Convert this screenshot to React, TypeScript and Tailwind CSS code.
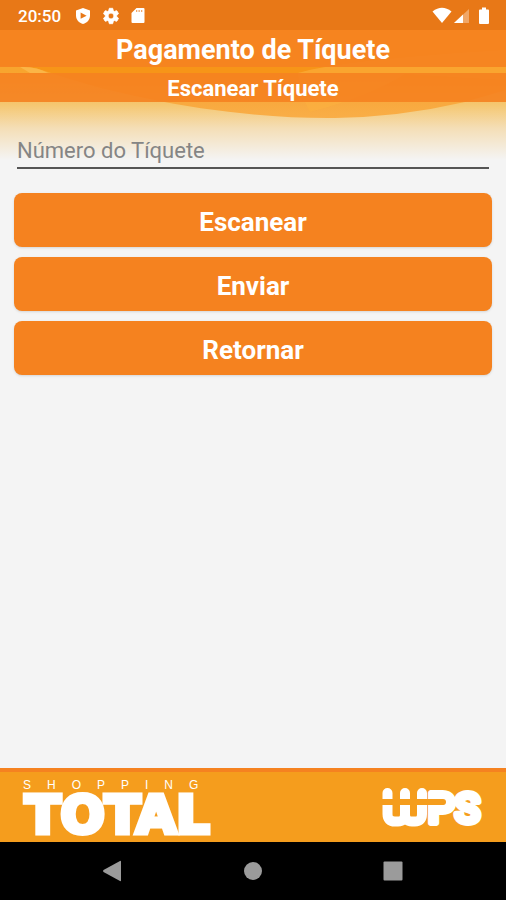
import { useState } from "react";

const actions = ["Escanear", "Enviar", "Retornar"];

function StatusBar() {
  return (
    <div className="relative flex h-[30px] items-center justify-between bg-[#e87817] pt-0.5 pr-4 pl-[18px] text-white">
      <div className="flex items-center gap-3">
        <span className="mr-0.5 text-[17px] leading-5 font-medium">20:50</span>
        <svg width="16" height="18" viewBox="0 0 16 18" fill="currentColor" aria-hidden="true">
          <path d="M8 1 15 3.6V8.5C15 12.6 12 16 8 17 4 16 1 12.6 1 8.500V3.600Z" />
          <path d="M5.600 5.600 11.600 8.700 5.600 11.800Z" fill="#e87817" />
        </svg>
        <svg width="16" height="18" viewBox="2 1 20 22" fill="currentColor" stroke="currentColor" strokeWidth="1" aria-hidden="true">
          <path d="M19.140 12.940c.04-.3.060-.61.060-.94 0-.32-.02-.64-.07-.94l2.030-1.580c.18-.14.230-.41.120-.61l-1.920-3.320c-.12-.22-.37-.29-.59-.22l-2.390.96c-.5-.38-1.030-.7-1.620-.94l-.36-2.540c-.04-.24-.24-.41-.48-.41h-3.840c-.24 0-.43.170-.47.410l-.36 2.540c-.59.240-1.130.570-1.620.940l-2.390-.96c-.22-.08-.47 0-.59.220L2.740 8.870c-.12.210-.08.470.120.610l2.030 1.580c-.05.3-.09.630-.09.940s.02.640.070.940l-2.030 1.580c-.18.140-.23.410-.12.610l1.920 3.320c.12.220.370.290.590.220l2.390-.96c.5.380 1.030.7 1.620.940l.36 2.540c.05.240.240.410.480.410h3.840c.24 0 .44-.17.470-.41l.36-2.540c.59-.24 1.130-.56 1.620-.94l2.390.960c.22.080.470 0 .59-.22l1.920-3.320c.12-.22.070-.47-.12-.61zM12 15.600c-1.980 0-3.600-1.620-3.600-3.600s1.620-3.600 3.600-3.600 3.600 1.620 3.600 3.600-1.620 3.600-3.600 3.600z" />
        </svg>
        <svg width="14" height="18" viewBox="0 0 14 18" fill="currentColor" aria-hidden="true">
          <path d="M5.500 1H12.500Q13.500 1 13.500 2V15Q13.500 16 12.500 16H1.500Q.5 16 .5 15V6Z" />
          <path d="M5 3h1.300v2H5zM7.500 3h1.300v2H7.500zM10 3h1.300v2H10z" fill="#f0a76a" />
        </svg>
      </div>
      <div className="flex items-center">
        <svg width="20" height="18" viewBox="0 0 20 18" fill="currentColor" aria-hidden="true">
          <path d="M.5 4.500Q10-3 19.500 4.500L10 16Z" />
        </svg>
        <svg className="ml-0.5" width="16" height="18" viewBox="0 0 16 18" fill="currentColor" aria-hidden="true">
          <path d="M0 16 15 2V16Z" opacity=".35" />
          <path d="M0 16 9 7.500V16Z" />
        </svg>
        <svg className="ml-2" width="12" height="18" viewBox="0 0 12 18" fill="currentColor" aria-hidden="true">
          <path d="M4 .5H8V2.500H10Q11 2.500 11 3.500V16Q11 17 10 17H2Q1 17 1 16V3.500Q1 2.500 2 2.500H4Z" />
        </svg>
      </div>
    </div>
  );
}

// Orange waves behind the header, fading into the page
function Waves() {
  return (
    <svg
      className="absolute inset-x-0 top-0 h-[160px] w-full"
      viewBox="0 0 506 160"
      preserveAspectRatio="none"
      aria-hidden="true"
    >
      <defs>
        <linearGradient id="fade" x1="0" y1="0" x2="0" y2="1">
          <stop offset="0" stopColor="#f8a52e" />
          <stop offset=".45" stopColor="#f8a52e" />
          <stop offset=".66" stopColor="#f5c873" />
          <stop offset=".8" stopColor="#f4deb6" />
          <stop offset="1" stopColor="#f4f4f4" />
        </linearGradient>
        <linearGradient id="wave" x1="0" y1="0" x2="0" y2="1">
          <stop offset="0" stopColor="#f79518" />
          <stop offset=".5" stopColor="#f79518" />
          <stop offset=".82" stopColor="#f8a93e" />
          <stop offset="1" stopColor="#f9ae48" />
        </linearGradient>
      </defs>
      <rect width="506" height="160" fill="url(#fade)" />
      <path d="M0 30V66Q25 64 48 72C130 100 240 119 335 118Q400 117 465 102L506 90V30Z" fill="url(#wave)" />
      <path d="M20 67Q36 66 48 73H30Z" fill="#fbb547" />
      <path d="M298 73Q340 60 506 50V80L405 74Q370 96 310 112Q300 95 298 73Z" fill="#fbb03f" opacity=".6" />
    </svg>
  );
}

function WpsLogo() {
  return (
    <svg className="mt-3 overflow-visible" width="102" height="46" viewBox="0 0 102 46" role="img" aria-label="WPS">
      <g fill="white">
        <path d="M2.500 15V9a5 5 0 0 1 10 0V15ZM20 15V9a5 5 0 0 1 10 0V15ZM37 15V9a5 5 0 0 1 10 0V15Z" />
        <path
          d="M7.500 21V30q0 7.500 7.500 7.500h3q7 0 7-7.500V21M25 30q0 7.500 7 7.500h3q7 0 7-7.500V21"
          fill="none"
          stroke="white"
          strokeWidth="10"
        />
      </g>
      <text
        x="48"
        y="39"
        fill="white"
        stroke="white"
        strokeWidth="6"
        strokeLinejoin="round"
        fontFamily="Roboto, sans-serif"
        fontSize="42"
        fontWeight="500"
      >
        PS
      </text>
      <path d="M47 15H63a3 3 0 0 1 0 6H47Z" fill="#f59d1d" />
    </svg>
  );
}

function Footer() {
  return (
    <footer className="flex h-[74px] items-start justify-between border-t-4 border-[#f58220] bg-[#f59d1d] pr-6 pl-[23px] text-white">
      <div className="pt-[7px]">
        <p className="font-['Liberation_Sans'] text-[12px] leading-3 tracking-[16px]">SHOPPING</p>
        <p className="pl-0.5 font-['DejaVu_Sans'] text-[52px] leading-[48px] font-bold [-webkit-text-stroke:5px_white]">TOTAL</p>
      </div>
      <WpsLogo />
    </footer>
  );
}

function NavBar() {
  return (
    <nav className="flex h-[58px] items-center justify-center gap-[116px] bg-black text-[#9b9b9b]">
      <button type="button" aria-label="Voltar">
        <svg width="24" height="24" viewBox="0 0 24 24" fill="currentColor">
          <path d="M20 2.500V21.500Q20 22.500 19 22L2.500 13Q1.500 12 2.500 11L19 2Q20 1.500 20 2.500Z" />
        </svg>
      </button>
      <button type="button" aria-label="Início">
        <svg width="24" height="24" viewBox="0 0 24 24" fill="currentColor">
          <circle cx="12" cy="12" r="9" />
        </svg>
      </button>
      <button type="button" aria-label="Recentes">
        <svg width="24" height="24" viewBox="0 0 24 24" fill="currentColor">
          <rect x="2.500" y="2.500" width="19" height="19" rx="1" />
        </svg>
      </button>
    </nav>
  );
}

export default function App() {
  const [ticket, setTicket] = useState("");

  return (
    <div className="relative flex min-h-screen flex-col bg-[#f4f4f4] font-['Roboto',sans-serif]">
      <Waves />
      <StatusBar />

      <header className="relative text-center font-bold text-white">
        <h1 className="bg-[#f58220]/90 pt-[5px] pb-0.5 text-[27px] leading-[30px]">Pagamento de Tíquete</h1>
        <h2 className="mt-1.5 bg-[#f58220]/90 pt-1 pb-px text-[22px] leading-6">Escanear Tíquete</h2>
      </header>

      <main className="relative flex-1 px-3.5 pt-[31px]">
        <input
          type="text"
          aria-label="Número do Tíquete"
          placeholder="Número do Tíquete"
          value={ticket}
          onChange={(e) => setTicket(e.target.value)}
          className="mx-[3px] block h-9 w-[calc(100%-6px)] border-b-2 border-[#555] bg-transparent text-[22px] text-[#333] outline-none placeholder:text-[#858585]"
        />
        <div className="mt-6 flex flex-col gap-2.5">
          {actions.map((label) => (
            <button
              key={label}
              type="button"
              className="h-[54px] rounded-lg bg-[#f5821f] pt-1 text-[26px] font-bold text-white shadow-sm"
            >
              {label}
            </button>
          ))}
        </div>
      </main>

      <Footer />
      <NavBar />
    </div>
  );
}
